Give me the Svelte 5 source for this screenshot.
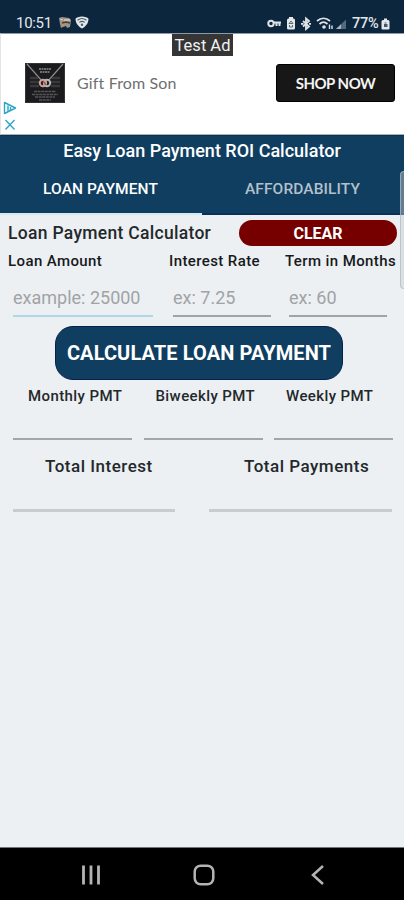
<script lang="ts">
  let tab = $state('loan');
  let amount = $state('');
  let rate = $state('');
  let term = $state('');

  function clear() {
    amount = '';
    rate = '';
    term = '';
  }
</script>

<div class="phone">
  <div class="status">
    <span class="clock">10:51</span>
    <svg class="left-icons" width="32" height="15" viewBox="0 0 32 15" aria-hidden="true">
      <path d="M1 3 4 2 11 3 13 5 12 12 9 13 8 11 5 12 3 13 2 9Z" fill="#9b9488" />
      <path d="M2 4 5 5M6 5 12 5" stroke="#d8cdbd" stroke-width="1.3" />
      <path d="M4 8 8 7 12 8" stroke="#4b3d35" stroke-width="1.4" fill="none" />
      <circle cx="5" cy="10" r="1.2" fill="#c78f65" />
      <path d="M24 1.5c-3 0-5.3 1-6.5 2.2 0 4.3 2.6 7.5 6.5 9.8 3.9-2.3 6.5-5.5 6.5-9.8C29.3 2.5 27 1.5 24 1.5Z" fill="#e4e8eb" />
      <path d="M19.5 5.2c2.7-2 6.3-2 9 0M21.3 7.4c1.6-1.2 3.8-1.2 5.4 0" fill="none" stroke="#4a5c6b" stroke-width="1.1" />
      <circle cx="24" cy="9.7" r="1.2" fill="#4a5c6b" />
    </svg>
    <svg class="right-icons" width="82" height="16" viewBox="0 0 82 16" fill="none" aria-hidden="true">
      <g stroke="#dfe3e6" stroke-width="2">
        <circle cx="4" cy="8.5" r="2.7" />
        <path d="M6.5 7.5H14M12.5 8v3M9.5 8v3" />
      </g>
      <rect x="20" y="3.5" width="8" height="11" rx="1.5" fill="#e4e8eb" />
      <rect x="22" y="2" width="4" height="2" fill="#e4e8eb" />
      <path d="m24 6-2 2.5h4zM22.5 10v2h3v-2" stroke="#5b6c79" />
      <path d="m36 6 6 5.500-3 2.500V3.500l3 2.500-6 5.500" stroke="#dfe3e6" stroke-width="1.8" />
      <path d="M34 8.800h2.500M42 8.800h2" stroke="#dfe3e6" stroke-width="1.8" />
      <g stroke="#dfe3e6" stroke-width="1.8">
        <path d="M50 6c4-3.500 9-3.500 13 0M52.500 9c2.500-2.300 5.500-2.300 8 0" />
        <path d="M62.500 9.500v4.500M65 10.500v3.500" stroke-width="1.4" />
      </g>
      <circle cx="57" cy="12" r="1.8" fill="#dfe3e6" />
      <path d="M69 14 79 4.500V14Z" fill="#526a7b" />
      <path d="M69 14 74 9.300V14Z" fill="#a7b2ba" />
    </svg>
    <span class="percent">77%</span>
    <svg class="battery" width="9" height="12" viewBox="0 0 9 12" aria-hidden="true">
      <path d="M2 2h1V.5h3V2h1q1.5 0 1.5 1.5v7q0 1-1 1h-6q-1 0-1-1v-7Q.5 2 2 2Z" fill="#e4e8eb" />
      <path d="M3.500 5.500v-1h2v1M3 6h3.500v3H3z" fill="#45596a" />
    </svg>
  </div>

  <div class="ad">
    <span class="test-ad">Test Ad</span>
    <svg class="product" width="40" height="40" viewBox="0 0 40 40" fill="none" aria-hidden="true">
      <rect width="40" height="40" fill="#1b1b1d" />
      <path d="M.5.5h39v39H.5Z" stroke="#343436" />
      <path d="M2 1 17 18M38 1 23 18" stroke="#8a8a8d" stroke-width="1.2" />
      <path d="M14 6h12M15 9h10" stroke="#6e6e71" stroke-width="2" stroke-dasharray="2 .5" />
      <path d="M5 15h8M27 15h8M5 19h9M26 19h9M5 23h9M26 23h9" stroke="#39393c" stroke-width="2.5" />
      <circle cx="18" cy="20" r="3.2" stroke="#c9a29b" stroke-width="2" />
      <circle cx="22" cy="20" r="3.2" stroke="#b5b5b7" stroke-width="2" />
      <path d="m18 18 3 4" stroke="#b54e43" stroke-width="1.5" />
      <path d="M9 28.500h22M7 31.500h26M10 34h20M14 37h12" stroke="#555558" stroke-width="1.5" stroke-dasharray="3 .6" />
    </svg>
    <span class="ad-text">Gift From Son</span>
    <button class="shop">SHOP NOW</button>
    <svg class="ad-choices" width="14" height="31" viewBox="0 0 14 31" fill="none" stroke="#2ba7c4" stroke-width="1.4" aria-hidden="true">
      <path d="M1.500 1.500v11L12.500 7Z" stroke-linejoin="round" />
      <path d="M5 4.500v6M7.500 6v4" />
      <path d="m2.500 19 9 9.500M11.500 19l-9 9.500" />
    </svg>
  </div>

  <header>
    <h1>Easy Loan Payment ROI Calculator</h1>
    <nav>
      <button class:active={tab === 'loan'} onclick={() => (tab = 'loan')}>LOAN PAYMENT</button>
      <button class:active={tab === 'afford'} onclick={() => (tab = 'afford')}>AFFORDABILITY</button>
    </nav>
  </header>

  <main>
    <div class="heading">
      <h2>Loan Payment Calculator</h2>
      <button class="clear" onclick={clear}>CLEAR</button>
    </div>

    <div class="inputs">
      <label class="focused">
        <span>Loan Amount</span>
        <input bind:value={amount} placeholder="example: 25000" />
      </label>
      <label>
        <span class="rate">Interest Rate</span>
        <input bind:value={rate} placeholder="ex: 7.25" />
      </label>
      <label>
        <span class="term">Term in Months</span>
        <input bind:value={term} placeholder="ex: 60" />
      </label>
    </div>

    <button class="calculate">CALCULATE LOAN PAYMENT</button>

    <div class="results">
      <div class="monthly">Monthly PMT</div>
      <div class="biweekly">Biweekly PMT</div>
      <div class="weekly">Weekly PMT</div>
    </div>

    <div class="totals">
      <div class="interest">Total Interest</div>
      <div class="payments">Total Payments</div>
    </div>
    <i class="scroll"></i>
  </main>

  <footer>
    <svg width="20" height="20" viewBox="0 0 20 20" fill="none" stroke="#b4b4b4" stroke-width="2.8" aria-hidden="true">
      <path d="M2.500.5v19M10 .5v19M17.500.5v19" />
    </svg>
    <svg width="22" height="22" viewBox="0 0 22 22" fill="none" stroke="#b4b4b4" stroke-width="2.5" aria-hidden="true">
      <rect x="1.700" y="1.700" width="18.600" height="18.600" rx="6" />
    </svg>
    <svg width="14" height="20" viewBox="0 0 14 20" fill="none" stroke="#b4b4b4" stroke-width="2.5" aria-hidden="true">
      <path d="M12 1 2 10l10 9" />
    </svg>
  </footer>
</div>

<style>
  .phone {
    display: flex;
    flex-direction: column;
    width: 404px;
    height: 900px;
    overflow: hidden;
    background: #ecf0f3;
    color: #24282b;
    font-family: Roboto, sans-serif;
  }

  .phone * {
    box-sizing: border-box;
  }

  svg {
    flex: none;
  }

  button {
    border: 0;
    padding: 0;
    font: inherit;
    color: inherit;
    background: none;
    white-space: nowrap;
  }

  .status {
    display: flex;
    align-items: flex-start;
    height: 33px;
    padding: 15px 14px 0 16px;
    background: #0b263d;
    color: #e4e8eb;
    font-size: 15px;
    line-height: 17px;
  }

  .clock {
    width: 42px;
    letter-spacing: -0.3px;
  }

  .right-icons {
    margin-left: auto;
  }

  .percent {
    width: 28px;
    margin-left: 3px;
    font-size: 14.5px;
    font-weight: 500;
    letter-spacing: -0.3px;
  }

  .battery {
    margin: 3px 0 0 1px;
  }

  .ad {
    position: relative;
    display: flex;
    align-items: center;
    height: 102px;
    padding: 0 9px 2px 25px;
    border-top: 1px solid #8f98a3;
    border-bottom: 1px solid #a9b2bb;
    border-left: 1px solid #e4e4e4;
    background: #fff;
  }

  .test-ad {
    position: absolute;
    top: 0;
    left: 171px;
    width: 61px;
    height: 22px;
    background: #353535;
    color: #f2f2f2;
    font-size: 16.5px;
    line-height: 24px;
    text-align: center;
    white-space: nowrap;
  }

  .product {
    margin-left: -1px;
  }

  .ad-text {
    margin: -1px 0 0 12px;
    color: #6f6f6f;
    font-family: Lato, sans-serif;
    font-size: 16px;
    letter-spacing: 0.15px;
  }

  .shop {
    width: 119px;
    height: 38px;
    margin-left: auto;
    border: 1px solid #000;
    border-radius: 3px;
    background: #171717;
    color: #f4f4f4;
    font-family: Lato, sans-serif;
    font-size: 15px;
    font-weight: 700;
    letter-spacing: -0.5px;
  }

  .ad-choices {
    position: absolute;
    top: 67px;
    left: 2px;
  }

  header {
    height: 80px;
    background: #103e60;
    color: #fff;
    border-top: 1px solid #0b3152;
    font-weight: 500;
  }

  h1 {
    height: 30px;
    margin: 0;
    font-size: 18px;
    font-weight: 500;
    line-height: 29px;
    text-align: center;
  }

  nav {
    display: flex;
  }

  nav button {
    flex: 1;
    height: 49px;
    padding-right: 1px;
    border-bottom: 2px solid #0d2f5c;
    color: #b3c0cc;
    font-size: 15.5px;
    line-height: 47px;
    letter-spacing: 0.1px;
  }

  nav button.active {
    color: #fff;
    border-bottom-color: #d5e9f3;
  }

  main {
    position: relative;
    flex: 1;
  }

  .heading {
    display: flex;
    align-items: center;
    justify-content: space-between;
    height: 32px;
    padding: 4px 7px 0 8px;
  }

  h2 {
    margin: 0;
    font-size: 17.5px;
    font-weight: 500;
    letter-spacing: 0.3px;
  }

  .clear {
    width: 158px;
    height: 26px;
    border-radius: 13px;
    background: #760000;
    color: #fff;
    font-size: 16px;
    font-weight: 700;
    line-height: 27px;
  }

  .inputs {
    display: grid;
    grid-template-columns: 142px 98px 98px;
    column-gap: 18px;
    padding: 4px 0 0 13px;
  }

  .inputs label {
    display: flex;
    flex-direction: column;
    color: #17191b;
    font-size: 15px;
    font-weight: 500;
  }

  .inputs span {
    height: 20px;
    margin-left: -5px;
    line-height: 21px;
    white-space: nowrap;
    letter-spacing: 0.4px;
  }

  .inputs span.rate,
  .inputs span.term {
    margin-left: -4px;
  }

  .inputs input {
    width: 100%;
    height: 46px;
    padding: 9px 0 0;
    border: 0;
    border-bottom: 2px solid #a0a4a7;
    background: none;
    color: #24282b;
    font-family: inherit;
    font-size: 18px;
  }

  .inputs .focused input {
    width: 140px;
    border-bottom-color: #add8e4;
  }

  .inputs input::placeholder {
    color: #a0a3a6;
    opacity: 1;
  }

  .calculate {
    display: block;
    width: 288px;
    height: 54px;
    margin: 9px 0 0 55px;
    border: 1px solid #08204f;
    border-radius: 18px;
    background: #103e60;
    color: #fff;
    font-size: 20px;
    font-weight: 700;
    line-height: 53px;
    letter-spacing: 0.1px;
  }

  .results {
    display: grid;
    grid-template-columns: 119px 119px 119px;
    column-gap: 11.5px;
    padding: 5px 0 0 13px;
    font-size: 15px;
    font-weight: 500;
    letter-spacing: 0.4px;
  }

  .results div {
    height: 55px;
    border-bottom: 2px solid #a0a6aa;
    line-height: 22px;
    white-space: nowrap;
  }

  .monthly {
    padding-left: 15px;
  }

  .biweekly,
  .weekly {
    padding-left: 12px;
  }

  .totals {
    display: grid;
    grid-template-columns: 162px 183px;
    column-gap: 34px;
    padding: 14px 0 0 13px;
    font-size: 17px;
    font-weight: 500;
    letter-spacing: 0.5px;
  }

  .totals div {
    height: 58px;
    border-bottom: 3px solid #c8cccf;
    line-height: 24px;
  }

  .interest {
    padding-left: 32px;
  }

  .payments {
    padding-left: 35px;
  }

  .scroll {
    position: absolute;
    top: -44px;
    right: -4px;
    width: 8px;
    height: 118px;
    border: 1px solid rgb(175 185 192 / 70%);
    border-radius: 4px;
    background: rgb(200 205 210 / 45%);
  }

  footer {
    display: flex;
    align-items: center;
    height: 53px;
    padding: 2px 0 0 81px;
    border-top: 1px solid #70777a;
    background: #000;
  }

  footer svg:nth-child(2) {
    margin-left: 92px;
  }

  footer svg:nth-child(3) {
    margin-left: 96px;
  }
</style>
